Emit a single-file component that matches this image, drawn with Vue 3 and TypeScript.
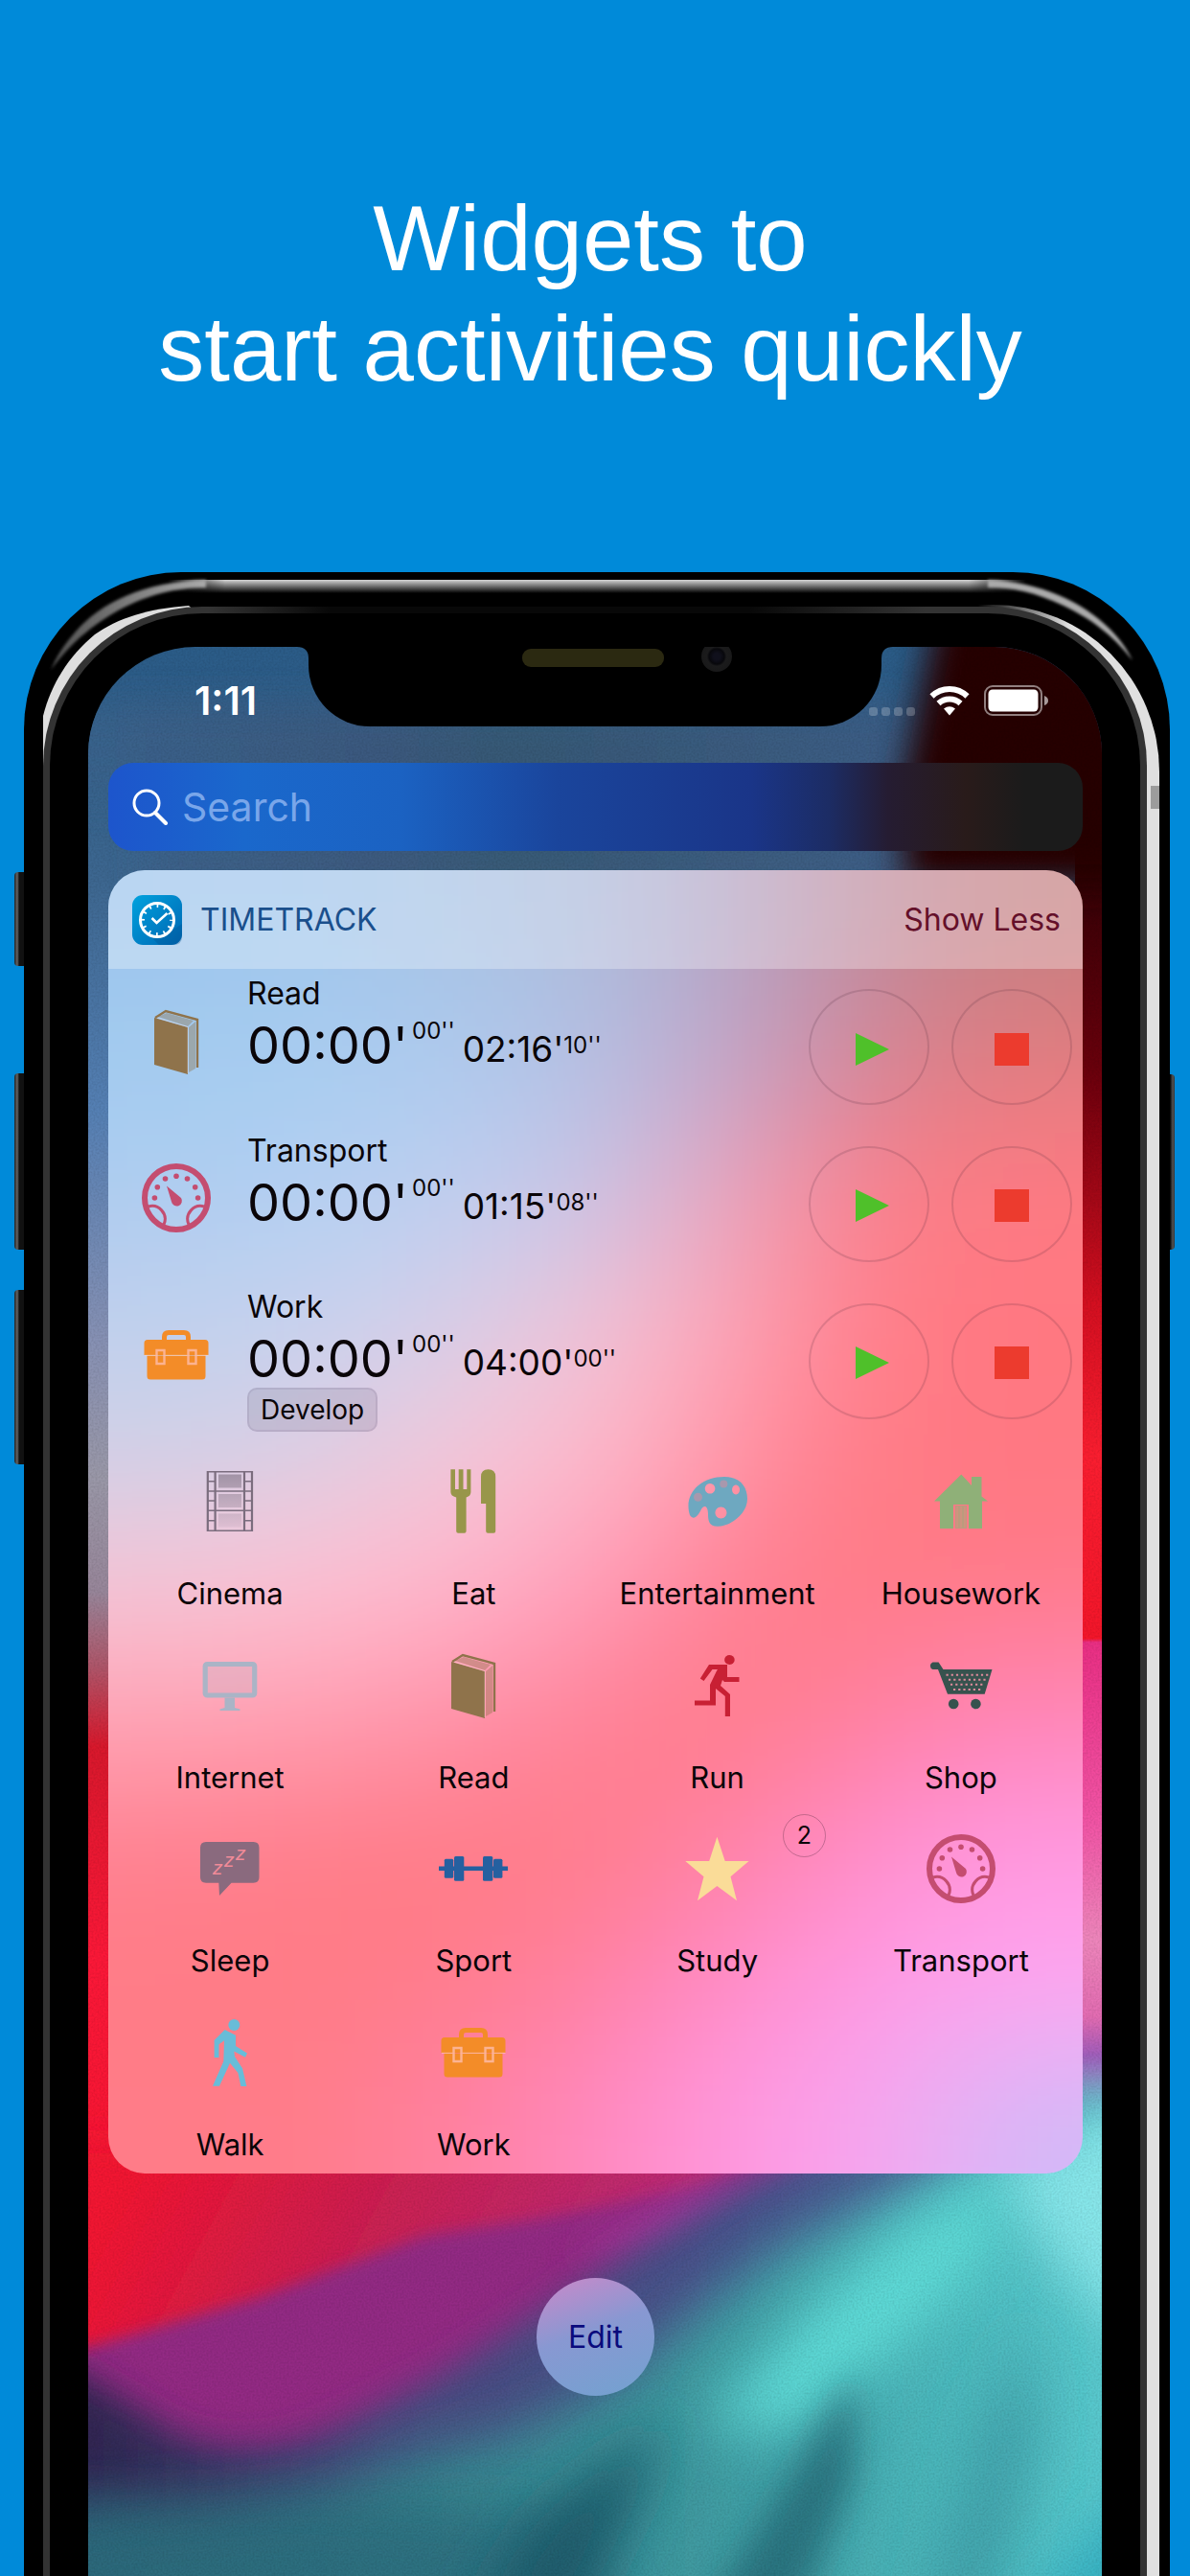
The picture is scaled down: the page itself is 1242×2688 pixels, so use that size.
<script setup lang="ts">
interface Timer {
  name: string
  icon: string
  color: string
  goal: string
  goalSeconds: string
  tag?: string
}

interface Activity {
  name: string
  icon: string
  color: string
  badge?: number
}

const timers: Timer[] = [
  { name: 'Read', icon: 'book', color: '#8f734b', goal: "02:16'", goalSeconds: "10''" },
  { name: 'Transport', icon: 'gauge', color: '#c44d70', goal: "01:15'", goalSeconds: "08''" },
  { name: 'Work', icon: 'briefcase', color: '#f38c28', goal: "04:00'", goalSeconds: "00''", tag: 'Develop' },
]

const activities: Activity[] = [
  { name: 'Cinema', icon: 'film', color: '#7b6d7e' },
  { name: 'Eat', icon: 'cutlery', color: '#98964a' },
  { name: 'Entertainment', icon: 'palette', color: '#6ea8c0' },
  { name: 'Housework', icon: 'house', color: '#8fb078' },
  { name: 'Internet', icon: 'monitor', color: '#aab4c6' },
  { name: 'Read', icon: 'book', color: '#8f734b' },
  { name: 'Run', icon: 'run', color: '#c82034' },
  { name: 'Shop', icon: 'cart', color: '#37524e' },
  { name: 'Sleep', icon: 'sleep', color: '#8a6a7e' },
  { name: 'Sport', icon: 'dumbbell', color: '#2560a0' },
  { name: 'Study', icon: 'star', color: '#fadc98', badge: 2 },
  { name: 'Transport', icon: 'gauge', color: '#c44d70' },
  { name: 'Walk', icon: 'walk', color: '#68bcd8' },
  { name: 'Work', icon: 'briefcase', color: '#f38c28' },
]

// Colours of the frosted glass, row by row; the blur melts them together.
const glass: string[] = [
  '9dc5ec a0c6ec a8c3e4 adbcdc b3a3c4 c08898 c57f80',
  'a3ccf0 a9cdf1 adcbee b4c0e4 c2a2c6 d5828f e27c80',
  'aeccf0 b3d0f3 bfcfef c8c4e6 eaa0b8 fb7c86 ff7a83',
  'bfd0ed c8d3ef d6cde6 f0c4d8 ff9fb2 ff7a85 ff7881',
  'd0d0e6 dccfe3 f3c6d8 ffbacc ff8ea2 ff7a84 ff7882',
  'f5c4d6 ffc0d2 ffb4ca ff9ab8 ff7d90 ff7a84 ff7a8a',
  'ffa2b4 ff9cb0 ff90a8 ff7f96 ff7b86 ff80a0 ff86b8',
  'ff8090 ff7c88 ff7b86 ff7b88 ff82a4 ff8ecb ff98e0',
  'ff7b86 ff7b86 ff7c8a ff80a0 ff8cc8 ff99e4 ffa5f0',
  'ff7b88 ff7b88 ff80a0 ff88bc ff97e0 f8a4f0 d2b9f8',
]

const cells = glass.flatMap((line, r) =>
  line.split(' ').map((hex, c) => {
    const left = c === 0 ? -2 : c
    const right = c === 6 ? 9 : c + 1
    const top = r === 0 ? -2 : r
    const bottom = r === glass.length - 1 ? 12 : r + 1
    return { fill: '#' + hex, x: left, y: top, w: right - left + 0.02, h: bottom - top + 0.02 }
  }),
)
</script>

<template>
  <svg class="defs" aria-hidden="true">
    <defs>
      <linearGradient id="frame-fade" x1="0" y1="0" x2="0" y2="1">
        <stop offset="0" stop-color="#7b6d7e" stop-opacity=".6" />
        <stop offset="1" stop-color="#7b6d7e" stop-opacity=".1" />
      </linearGradient>
      <linearGradient id="app-blue" x1="0" y1="0" x2="1" y2="1">
        <stop offset="0" stop-color="#00a2de" />
        <stop offset="1" stop-color="#0066b2" />
      </linearGradient>
    </defs>
    <symbol id="icon-book" viewBox="0 0 72 72">
      <path d="M17 10 26 6l28 8-6 6zM49 21l7-6v49l-7 4z" fill="currentColor" opacity=".4" />
      <path d="M13 11 48 21v49L13 60z" fill="currentColor" />
      <path d="M14 11 25 4l33 9v50" fill="none" stroke="currentColor" stroke-width="2.4" />
      <path d="M16 11 48 20.500V69" fill="none" stroke="#ffe4e4" stroke-opacity=".35" />
    </symbol>
    <symbol id="icon-gauge" viewBox="0 0 72 72">
      <g fill="none" stroke="currentColor">
        <circle cx="36" cy="36" r="33" stroke-width="6" />
        <path d="M7 45c10-3 21 7 16 19M65 45c-10-3-21 7-16 19" stroke-width="3" />
      </g>
      <g fill="currentColor">
        <path d="M26 23.500 41 36a5.500 5.500 0 1 1-10 4z" />
        <circle cx="36" cy="13.300" r="2.800" /><circle cx="24.500" cy="16" r="2.800" />
        <circle cx="47.500" cy="16" r="2.800" /><circle cx="16.300" cy="24.700" r="2.800" />
        <circle cx="55.700" cy="24.700" r="2.800" /><circle cx="13.400" cy="36" r="2.800" />
        <circle cx="58.600" cy="36" r="2.800" />
      </g>
    </symbol>
    <symbol id="icon-briefcase" viewBox="0 0 72 72">
      <path d="M23.500 22v-5q0-4.500 4.500-4.500h16q4.500 0 4.500 4.500v5" fill="none" stroke="currentColor" stroke-width="5" />
      <path d="M6 20h60q3.500 0 3.500 3.500V36h-67V23.500Q2.500 20 6 20zM5.500 36.500h61V58q0 3.500-3.500 3.500H9q-3.500 0-3.500-3.500z" fill="currentColor" />
      <path d="M3 36.300h11.500M24.500 36.300h23M57.500 36.300h12" stroke="#ffd8c8" stroke-opacity=".5" stroke-width="1.200" />
      <path d="M15.500 31h8v14h-8zM48.500 31h8v14h-8z" fill="none" stroke="#ffc0b4" stroke-opacity=".75" stroke-width="2.400" />
    </symbol>
    <symbol id="icon-film" viewBox="0 0 72 72">
      <path d="M24 7.500h24v14H24zM24 28h24v14H24zM24 48.500h24v14H24z" fill="url(#frame-fade)" />
      <path d="M12.800 4v63M20.600 4v63M51 4v63M59 4v63" stroke="currentColor" stroke-width="2.200" />
      <path d="M12 4.700h48M12 25h48M12 45.300h48M12 66.300h48M12 14.700h8.600M12 35h8.600M12 55.700h8.600M51 14.700h8.600M51 35h8.600M51 55.700h8.600" stroke="currentColor" stroke-width="1.500" />
    </symbol>
    <symbol id="icon-cutlery" viewBox="0 0 72 72">
      <path d="M12.400 2.300h4.600V23h3.700V2.300h4.800V23h3.800V2.300h4.100V26q0 4-4.800 5.500v35.200q0 2-2 2h-6.400q-2 0-2-2V31.500q-5.800-1.500-5.800-5.500z" fill="currentColor" />
      <path d="M44 38V10q0-7.700 7.600-7.700T59.200 10v56.700q0 2-2 2h-6q-2 0-2-2V38z" fill="currentColor" />
    </symbol>
    <symbol id="icon-palette" viewBox="0 0 72 72">
      <path fill-rule="evenodd" fill="currentColor" d="M7 50C0 28 18 10 43 10c17 0 24 11 24 23 0 16-18 28.700-31 28.700-9 0-10-6-10-13 0-8-4-10-7-5-4 8-8 12-12 6.300zM28 17a5.300 5.300 0 1 0 .1 0zM55 18.500a4 5 0 1 0 .1 0zM39.400 41.500a6 6 0 1 0 .1 0z" />
      <circle cx="42.300" cy="17.500" r="4" fill="#ff8090" opacity=".4" />
      <circle cx="15.500" cy="31.300" r="4.500" fill="#ff8090" opacity=".4" />
    </symbol>
    <symbol id="icon-house" viewBox="0 0 72 72">
      <path d="M36.300 7.500 47 19v-9h10.500v20.500l6.500 5h-6V64H44V39H28v25H14V35.500H8z" fill="currentColor" />
      <path d="M30 40h12v24H30z" fill="currentColor" opacity=".6" />
      <path d="M32 41v22M36 41v22M40 41v22" stroke="#ff8088" stroke-opacity=".5" />
    </symbol>
    <symbol id="icon-monitor" viewBox="0 0 72 72">
      <path d="M10.500 14h51v32h-51z" fill="currentColor" fill-opacity=".2" />
      <rect x="10.200" y="13.500" width="51.500" height="32.500" rx="2" fill="none" stroke="currentColor" stroke-width="5.200" />
      <path d="M30.500 48.500H41V59l5.500 1.500V62h-21v-1.500l5-1.500z" fill="currentColor" />
    </symbol>
    <symbol id="icon-run" viewBox="0 0 72 72">
      <ellipse cx="48.400" cy="9" rx="5.300" ry="5" fill="currentColor" />
      <path d="M27 14h19v13h12.500v5H43l-2-2-2 6 10 9v23h-5.200V47L34 39v17.500H12v-5h16V35l7-14.500 1-1.500h-5.500l-9 12-3.700-2.500z" fill="currentColor" />
    </symbol>
    <symbol id="icon-cart" viewBox="0 0 72 72">
      <path d="M12.600 11.500 17.500 19h51l-7.800 25.700H22L12 19H6.500a4 4 0 0 1 0-7.500z" fill="currentColor" />
      <circle cx="28.200" cy="55" r="5.300" fill="currentColor" />
      <circle cx="51.400" cy="55" r="5.300" fill="currentColor" />
      <path d="M20.500 24.700h44M23 29.700h40M25 34.700h36M28 40h31" stroke="#e08a9c" stroke-width="2" stroke-dasharray="2.200 3" fill="none" />
    </symbol>
    <symbol id="icon-sleep" viewBox="0 0 72 72">
      <path d="M11 8h49.500q6 0 6 6v31q0 5.700-6 5.700h-23L25 64l-.700-13.300H11q-6 0-6-5.700V14q0-6 6-6z" fill="currentColor" />
    </symbol>
    <symbol id="icon-dumbbell" viewBox="0 0 72 72">
      <path d="M0 33.400h72V38H0z" fill="currentColor" />
      <g fill="currentColor">
        <rect x="5.800" y="25.700" width="9.400" height="20" rx="1.500" /><rect x="16" y="23" width="10.300" height="25.700" rx="1.500" />
        <rect x="46" y="23" width="10.300" height="25.700" rx="1.500" /><rect x="57" y="25.700" width="9.400" height="20" rx="1.500" />
      </g>
    </symbol>
    <symbol id="icon-star" viewBox="0 0 72 72">
      <path d="m35.400 2.700 8.300 25.300h24.900L49.500 44.300 56 69.300 35.400 54 15 69.300l6.500-25L2.300 28h24.900z" fill="currentColor" />
    </symbol>
    <symbol id="icon-walk" viewBox="0 0 72 72">
      <circle cx="40.300" cy="7" r="6" fill="currentColor" />
      <path d="M30.600 12 42 17.700V29l12 7.500-2 4.300-11.700-6.300.7 5.500 8 12.300 4.400 18.700h-6l-3-14L36 46.700 25 70.700h-7L29.300 45l.7-21.700-5.500 4V41H19.600V23z" fill="currentColor" />
    </symbol>
  </svg>

  <main class="page">
    <h1 class="headline">Widgets to<br />start activities quickly</h1>

    <div class="phone">
      <i class="side-key mute"></i><i class="side-key up"></i><i class="side-key down"></i><i class="side-key power"></i>
      <i class="top-shine"></i>
      <i class="right-rim"></i>
      <svg class="corner left" viewBox="0 0 240 230" aria-hidden="true">
        <defs>
          <linearGradient id="shine-left" gradientUnits="userSpaceOnUse" x1="40" y1="0" x2="190" y2="0">
            <stop offset="0" stop-color="#555" /><stop offset="1" stop-color="#aaa" />
          </linearGradient>
          <filter id="edge" x="-10%" y="-10%" width="120%" height="120%"><feGaussianBlur stdDeviation="1.500" /></filter>
        </defs>
        <path d="M190 8C125 10 80 32 54 62 40 78 34 88 28 102 52 70 76 52 104 37 136 21 165 16 190 16z" fill="url(#shine-left)" filter="url(#edge)" />
        <path d="M172 35C130 38 98 48 74 65 46 88 28 118 20 150v60h20L190 50z" fill="#dedede" />
      </svg>
      <svg class="corner right" viewBox="0 0 240 230" aria-hidden="true">
        <path d="M50 8C105 10 150 32 176 58c14 14 20 24 25 34-22-28-45-44-72-57C100 21 75 16 50 16z" fill="#aaa" filter="url(#edge)" />
      </svg>

      <div class="bezel">
        <div class="screen">
          <svg class="wallpaper" viewBox="0 0 1058 2013" preserveAspectRatio="none" aria-hidden="true">
            <defs>
              <linearGradient id="wall-left" x1="0" y1="0" x2="0" y2="1">
                <stop offset="0" stop-color="#2b5c88" /><stop offset=".12" stop-color="#3d6790" />
                <stop offset=".24" stop-color="#5580b4" /><stop offset=".36" stop-color="#8791b4" />
                <stop offset=".43" stop-color="#9a98a8" /><stop offset=".49" stop-color="#98869a" />
                <stop offset=".53" stop-color="#b05468" /><stop offset=".57" stop-color="#d8182c" />
                <stop offset=".68" stop-color="#fb1838" /><stop offset="1" stop-color="#ee1228" />
              </linearGradient>
              <linearGradient id="wall-right" x1="0" y1="0" x2="0" y2="1">
                <stop offset="0" stop-color="#1c0004" /><stop offset=".12" stop-color="#350006" />
                <stop offset=".22" stop-color="#6a000c" /><stop offset=".34" stop-color="#d40f20" />
                <stop offset=".42" stop-color="#fa1e30" /><stop offset=".514" stop-color="#f3162a" />
                <stop offset=".516" stop-color="#ea2f84" /><stop offset=".61" stop-color="#f255a6" />
                <stop offset=".67" stop-color="#ee86bc" /><stop offset=".71" stop-color="#e36cb2" />
                <stop offset=".73" stop-color="#a45abb" /><stop offset=".76" stop-color="#93a0cc" />
                <stop offset=".8" stop-color="#82e4ea" />
              </linearGradient>
              <linearGradient id="teal" x1="0" y1="0" x2="1" y2="0">
                <stop offset="0" stop-color="#2c5c74" /><stop offset=".3" stop-color="#35808c" />
                <stop offset=".55" stop-color="#409ea4" /><stop offset=".75" stop-color="#50c0c4" />
                <stop offset="1" stop-color="#6cdce2" />
              </linearGradient>
              <linearGradient id="slate" x1="0" y1="0" x2="1" y2="0">
                <stop offset=".05" stop-color="#2f2550" /><stop offset=".3" stop-color="#4a4a80" />
                <stop offset=".6" stop-color="#47528c" /><stop offset="1" stop-color="#5f86b0" />
              </linearGradient>
              <linearGradient id="red-fade" x1="0" y1="0" x2="1" y2=".15">
                <stop offset=".1" stop-color="#f31530" /><stop offset=".35" stop-color="#cc1f50" />
                <stop offset=".7" stop-color="#b8307e" />
              </linearGradient>
              <linearGradient id="sky" x1="0" y1="0" x2="1" y2="0">
                <stop offset="0" stop-color="#3b6690" /><stop offset=".4" stop-color="#3d587c" />
                <stop offset=".55" stop-color="#385871" /><stop offset="1" stop-color="#3f5c84" />
              </linearGradient>
              <filter id="soft8" x="-30%" y="-30%" width="160%" height="160%"><feGaussianBlur stdDeviation="8" /></filter>
              <filter id="soft18" x="-40%" y="-40%" width="180%" height="180%"><feGaussianBlur stdDeviation="18" /></filter>
              <filter id="soft30" x="-60%" y="-60%" width="220%" height="220%"><feGaussianBlur stdDeviation="28" /></filter>
              <filter id="grain" x="0" y="0" width="100%" height="100%">
                <feTurbulence type="fractalNoise" baseFrequency=".5" numOctaves="2" seed="4" />
                <feColorMatrix values="0 0 0 0 0  0 0 0 0 0  0 0 0 0 0  1 0 0 0 -.35" />
              </filter>
            </defs>
            <rect width="1058" height="2013" fill="url(#wall-left)" />
            <path d="M-60 60H850V260H60V160H-60z" fill="url(#sky)" filter="url(#soft18)" opacity=".8" />
            <rect x="1030" width="28" height="2013" fill="url(#wall-right)" />
            <path d="M890-60h260v310H850V140z" fill="#280005" filter="url(#soft18)" />
            <path d="M-60 1620h1200v300H-60z" fill="#cc1f50" opacity="0" />
            <path d="M-60 1560H1020v300H-60z" fill="url(#red-fade)" filter="url(#soft18)" />
            <path d="M760 1560 640 1608 470 1640 351 1658 180 1722-40 1786v120l209 69 170-70 202-120 320-200z" fill="#932a84" filter="url(#soft8)" />
            <path d="M820 1560 620 1618 500 1680l130-10 190-90z" fill="#ad38a0" filter="url(#soft18)" opacity=".8" />
            <path d="M-80 1770 0 1805l90 58q80 35 170-5l100-50 110-68 100-68 90-54 100-52 120-50h360v600H-80z" fill="url(#slate)" filter="url(#soft18)" />
            <path d="M-100 1930 60 1940q130 20 260-50l130-30 100-50 80-70 90-70 140-65 140-90h300v700H-100z" fill="url(#teal)" filter="url(#soft30)" />
            <path d="m940 1590 140-70h100v300l-140-100z" fill="#90ecf0" filter="url(#soft30)" opacity=".85" />
            <path d="M640 1860 760 1730 850 1650 960 1590l-20 90-90 90-110 90z" fill="#5edcd8" filter="url(#soft30)" />
            <path d="M-80 1960 200 1930l300 20 60 120H-80z" fill="#2c6a7c" filter="url(#soft30)" opacity=".7" />
            <path d="M400 2060 470 1950 600 1850l-30 90-60 120z" fill="#1f5c6c" filter="url(#soft30)" />
            <path d="M640 2060 720 1930 800 1800l0 110-60 150z" fill="#1c5c6a" filter="url(#soft18)" opacity=".65" />
            <path d="m870 2060 60-200 50-110 10 120-50 190z" fill="#3c9aa4" filter="url(#soft30)" opacity=".8" />
            <path d="M960 2060l160-160v160z" fill="#34b0c2" filter="url(#soft30)" />
            <rect width="1058" height="2013" filter="url(#grain)" opacity=".18" />
          </svg>

          <div class="notch"><i class="speaker"></i><i class="camera"></i></div>
          <svg class="notch-ear ear-left" viewBox="0 0 12 12" aria-hidden="true"><path d="M0 0h12v12Q12 0 0 0z" /></svg>
          <svg class="notch-ear ear-right" viewBox="0 0 12 12" aria-hidden="true"><path d="M12 0H0v12Q0 0 12 0z" /></svg>

          <header class="status">
            <time class="clock">1:11</time>
            <svg width="48" height="32" viewBox="0 0 48 32" aria-hidden="true">
              <g fill="#fff" opacity=".22">
                <rect x="0" y="23" width="9" height="9" rx="3" /><rect x="13" y="23" width="9" height="9" rx="3" />
                <rect x="26" y="23" width="9" height="9" rx="3" /><rect x="39" y="23" width="9" height="9" rx="3" />
              </g>
            </svg>
            <svg width="42" height="32" viewBox="0 0 42 32" aria-hidden="true">
              <g fill="none" stroke="#fff" stroke-width="6">
                <path d="M2.500 11.500a26.500 26.500 0 0 1 37 0" /><path d="M9.500 19a17 17 0 0 1 23 0" />
              </g>
              <path d="M15 24.500q6-4.500 12 0L21 31.500z" fill="#fff" />
            </svg>
            <svg width="68" height="32" viewBox="0 0 68 32" aria-hidden="true">
              <rect x="1" y="1" width="59" height="30" rx="8" fill="none" stroke="#fff" stroke-opacity=".5" stroke-width="2" />
              <rect x="4.500" y="4.500" width="52" height="23" rx="4.500" fill="#fff" />
              <path d="M63 11q4 1.500 4 5t-4 5z" fill="#fff" opacity=".6" />
            </svg>
          </header>

          <form class="search" role="search" @submit.prevent>
            <svg width="38" height="38" viewBox="0 0 38 38" aria-hidden="true">
              <g fill="none" stroke="#fff" stroke-width="3"><circle cx="15" cy="15" r="13" /><path d="m24 25 11 11" stroke-width="4" stroke-linecap="round" /></g>
            </svg>
            <input type="text" aria-label="Search" placeholder="Search" />
          </form>

          <section class="card">
            <svg class="glass" viewBox="0 0 7 10" preserveAspectRatio="none" aria-hidden="true">
              <filter id="melt" filterUnits="userSpaceOnUse" x="-2" y="-2" width="11" height="14">
                <feGaussianBlur stdDeviation=".6 .5" />
              </filter>
              <g filter="url(#melt)">
                <rect v-for="(cell, i) in cells" :key="i" :x="cell.x" :y="cell.y" :width="cell.w" :height="cell.h" :fill="cell.fill" />
              </g>
            </svg>

            <header class="card-head">
              <svg class="app-icon" viewBox="0 0 52 52" aria-hidden="true">
                <rect width="52" height="52" rx="11" fill="url(#app-blue)" />
                <path d="m40 38 12-8v13q0 9-9 9H28l-9-9z" fill="#00508f" opacity=".3" />
                <circle cx="26" cy="26" r="17.500" fill="none" stroke="#fff" stroke-width="3" />
                <circle cx="26" cy="26" r="15" fill="none" stroke="#fff" stroke-width="4" stroke-dasharray="1.800 6.054" stroke-dashoffset=".9" />
                <path d="m20.500 24 5 5 11-10" fill="none" stroke="#fff" stroke-width="2.600" />
              </svg>
              <h2 class="app-name">TIMETRACK</h2>
              <button type="button" class="toggle">Show Less</button>
            </header>

            <ul class="timers">
              <li v-for="timer in timers" :key="timer.name" class="timer">
                <svg class="icon" :style="{ color: timer.color }" aria-hidden="true"><use :href="'#icon-' + timer.icon" /></svg>
                <div class="info">
                  <span class="title">{{ timer.name }}</span>
                  <div class="times">
                    <span class="elapsed">00:00'</span>
                    <span class="elapsed-seconds">00''</span>
                    <span class="goal">{{ timer.goal }}</span>
                    <span class="goal-seconds">{{ timer.goalSeconds }}</span>
                  </div>
                  <span v-if="timer.tag" class="tag">{{ timer.tag }}</span>
                </div>
                <button type="button" class="round" :aria-label="'Start ' + timer.name">
                  <svg width="42" height="34" viewBox="0 0 42 34" aria-hidden="true"><path d="M7 0v34l35-17z" fill="#4fc02a" /></svg>
                </button>
                <button type="button" class="round" :aria-label="'Stop ' + timer.name">
                  <svg width="36" height="34" viewBox="0 0 36 34" aria-hidden="true"><path d="M0 0h36v34H0z" fill="#ec3b2e" /></svg>
                </button>
              </li>
            </ul>

            <div class="activities">
              <button v-for="activity in activities" :key="activity.name" type="button" class="activity">
                <svg class="icon" :style="{ color: activity.color }" aria-hidden="true">
                  <use :href="'#icon-' + activity.icon" />
                  <g v-if="activity.icon === 'sleep'" class="snore">
                    <text x="18" y="42">z</text><text x="30" y="34">z</text><text x="42" y="27">z</text>
                  </g>
                </svg>
                <span class="label">{{ activity.name }}</span>
                <span v-if="activity.badge" class="badge">{{ activity.badge }}</span>
              </button>
            </div>
          </section>

          <button type="button" class="edit">Edit</button>
        </div>
      </div>
    </div>
  </main>
</template>

<style>
html,
body {
  margin: 0;
  background: #008ad9;
}
</style>

<style scoped>
.defs {
  position: absolute;
  width: 0;
  height: 0;
}
.page {
  box-sizing: border-box;
  min-height: 100vh;
  display: flex;
  flex-direction: column;
  overflow: hidden;
  background: #008ad9;
  font-family: Inter, 'Liberation Sans', sans-serif;
}
.page *,
.page *::before {
  box-sizing: border-box;
}
button {
  margin: 0;
  padding: 0;
  border: 0;
  background: none;
  color: inherit;
  font: inherit;
}
.headline {
  margin: 0;
  padding: 191px 10px 176px 0;
  color: #fff;
  font: 400 96px/115px 'Liberation Sans', sans-serif;
  text-align: center;
}

/* Phone body */
.phone {
  position: relative;
  flex: 1;
  display: flex;
  margin: 0 21px 0 25px;
  padding: 36px 24px 0 20px;
  border-radius: 164px 164px 0 0;
  background: #000;
}
.side-key {
  position: absolute;
  left: -10px;
  width: 10px;
  border-radius: 4px 0 0 4px;
  background: linear-gradient(90deg, #222, #666 30%, #111 50%);
}
.mute {
  top: 313px;
  height: 98px;
}
.up {
  top: 523px;
  height: 184px;
}
.down {
  top: 749px;
  height: 182px;
}
.power {
  top: 524px;
  left: auto;
  right: -5px;
  width: 5px;
  height: 183px;
  border-radius: 0 4px 4px 0;
  background: linear-gradient(90deg, #000, #555 60%, #333);
}
.top-shine {
  position: absolute;
  top: 8px;
  left: 150px;
  right: 150px;
  height: 14px;
  background: linear-gradient(#d4d4d4, #808080 40%, #000);
  mask-image: linear-gradient(90deg, transparent, #000 60px, #000 calc(100% - 60px), transparent);
}
.right-rim {
  position: absolute;
  top: 34px;
  right: 11px;
  bottom: 0;
  width: 190px;
  border-radius: 0 174px 0 0;
  background:
    linear-gradient(#9c9c9c, #9c9c9c) right 189px / 9px 24px no-repeat,
    linear-gradient(90deg, transparent, #e0e0e0 50%);
}
.corner {
  position: absolute;
  top: 0;
  width: 240px;
  height: 230px;
}
.left {
  left: 0;
}
.right {
  right: 0;
}
.bezel {
  position: relative;
  flex: 1;
  display: flex;
  padding: 35px 40px 0;
  border: 7px solid transparent;
  border-bottom: 0;
  border-radius: 166px 166px 0 0;
  background:
    linear-gradient(#000, #000) padding-box,
    linear-gradient(90deg, #333 0 15%, #080808 26% 64%, #333 80%) border-box;
}
.screen {
  position: relative;
  flex: 1;
  min-width: 0;
  overflow: hidden;
  padding: 0 20px 188px 21px;
  border-radius: 112px 112px 0 0;
}
.wallpaper {
  position: absolute;
  inset: 0;
  width: 100%;
  height: 100%;
}
.notch {
  position: absolute;
  top: -2px;
  left: 50%;
  width: 598px;
  height: 85px;
  margin-left: -299px;
  border-radius: 0 0 64px 64px;
  background: #000;
}
.notch-ear {
  position: absolute;
  top: 0;
  width: 12px;
  height: 12px;
}
.ear-left {
  right: 50%;
  margin-right: 299px;
}
.ear-right {
  left: 50%;
  margin-left: 299px;
}
.speaker {
  position: absolute;
  top: 4px;
  left: 223px;
  width: 148px;
  height: 19px;
  border-radius: 9px;
  background: #2b2911;
}
.camera {
  position: absolute;
  top: -4px;
  left: 410px;
  width: 32px;
  height: 32px;
  border-radius: 50%;
  background: radial-gradient(#10101c 0 15%, #08080c 35%, #1b1b1c 45%, #161616);
}

/* Status bar and search */
.status {
  position: relative;
  display: flex;
  align-items: center;
  gap: 15px;
  height: 121px;
  padding: 0 35px 9px 90px;
  color: #fff;
}
.clock {
  margin-right: auto;
  font-size: 41px;
  font-weight: 600;
  line-height: 40px;
}
.search {
  position: relative;
  display: flex;
  align-items: center;
  gap: 14px;
  height: 92px;
  padding: 0 25px;
  border-radius: 26px;
  background: linear-gradient(90deg, #1d55cc, #1a68cc 14%, #1b62c2 30%, #1a459c 46%, #1a3588 66%, #1c2c64 74%, #251c32 80%, #291b1a 88%, #1b1b1b 94%);
}
.search input {
  flex: 1;
  min-width: 0;
  padding: 0;
  border: 0;
  outline: 0;
  background: none;
  color: #fff;
  font: 400 41px/52px Inter, 'Liberation Sans', sans-serif;
}
.search input::placeholder {
  color: #79a6ea;
  opacity: 1;
}

/* Widget */
.card {
  position: relative;
  overflow: hidden;
  margin-top: 20px;
  border-radius: 38px;
  color: #0a0508;
}
.glass {
  position: absolute;
  inset: 0;
  width: 100%;
  height: 100%;
}
.card-head {
  position: relative;
  display: flex;
  align-items: center;
  gap: 19px;
  height: 103px;
  padding: 0 23px 0 25px;
  background: rgba(255, 255, 255, 0.3);
  font-size: 32px;
}
.app-icon {
  width: 52px;
  height: 52px;
}
.app-name {
  margin: 0;
  color: #1a4f8c;
  font-size: 32px;
  font-weight: 400;
}
.toggle {
  margin-left: auto;
  color: #64102a;
}
.timers {
  position: relative;
  display: grid;
  grid-auto-rows: 1fr;
  height: 491px;
  margin: 0;
  padding: 0;
  list-style: none;
}
.timer {
  display: flex;
  align-items: center;
  gap: 23px;
  padding-right: 11px;
}
.icon {
  flex: none;
  width: 72px;
  height: 72px;
}
.timer .icon {
  margin: 0 15px 12px 35px;
}
.info {
  flex: 1;
  align-self: flex-start;
  padding-top: 6px;
}
.title {
  display: block;
  font-size: 32px;
  line-height: 40px;
}
.times {
  display: flex;
  height: 56px;
  margin-top: 6px;
  white-space: nowrap;
}
.elapsed {
  font-size: 54px;
  line-height: 56px;
}
.elapsed-seconds {
  margin: 0 8px 0 4px;
  font-size: 24px;
  line-height: 26px;
}
.goal {
  align-self: flex-end;
  font-size: 37px;
  line-height: 48px;
}
.goal-seconds {
  font-size: 24px;
  line-height: 56px;
}
.tag {
  display: inline-block;
  margin-top: 2px;
  padding: 0 12px;
  border: 2px solid rgba(80, 60, 100, 0.1);
  border-radius: 10px;
  background: rgba(90, 80, 110, 0.15);
  font-size: 28px;
  line-height: 42px;
}
.round {
  display: flex;
  align-items: center;
  justify-content: center;
  flex: none;
  width: 126px;
  height: 121px;
  padding-top: 4px;
  border: 2px solid rgba(60, 30, 50, 0.16);
  border-radius: 50%;
}
.activities {
  position: relative;
  display: grid;
  grid-template-columns: repeat(4, minmax(0, 1fr));
  grid-auto-rows: 1fr;
  height: 766px;
}
.activity {
  position: relative;
  display: flex;
  flex-direction: column;
  align-items: center;
  gap: 40px;
  padding-top: 29px;
}
.snore {
  fill: #f08a98;
  font: italic 21px 'Liberation Sans', sans-serif;
}
.label {
  font-size: 31px;
  line-height: 40px;
}
.badge {
  position: absolute;
  top: 8px;
  right: 14px;
  width: 45px;
  height: 45px;
  border: 1px solid rgba(60, 30, 50, 0.3);
  border-radius: 50%;
  font-size: 25px;
  line-height: 43px;
  text-align: center;
}
.edit {
  position: relative;
  display: block;
  width: 123px;
  height: 123px;
  margin: 109px auto 0;
  border-radius: 50%;
  background: linear-gradient(160deg, #bd8ccb 10%, #8898d2 45%, #72a2d0);
  color: #0a0a7c;
  font-size: 32px;
}
</style>
